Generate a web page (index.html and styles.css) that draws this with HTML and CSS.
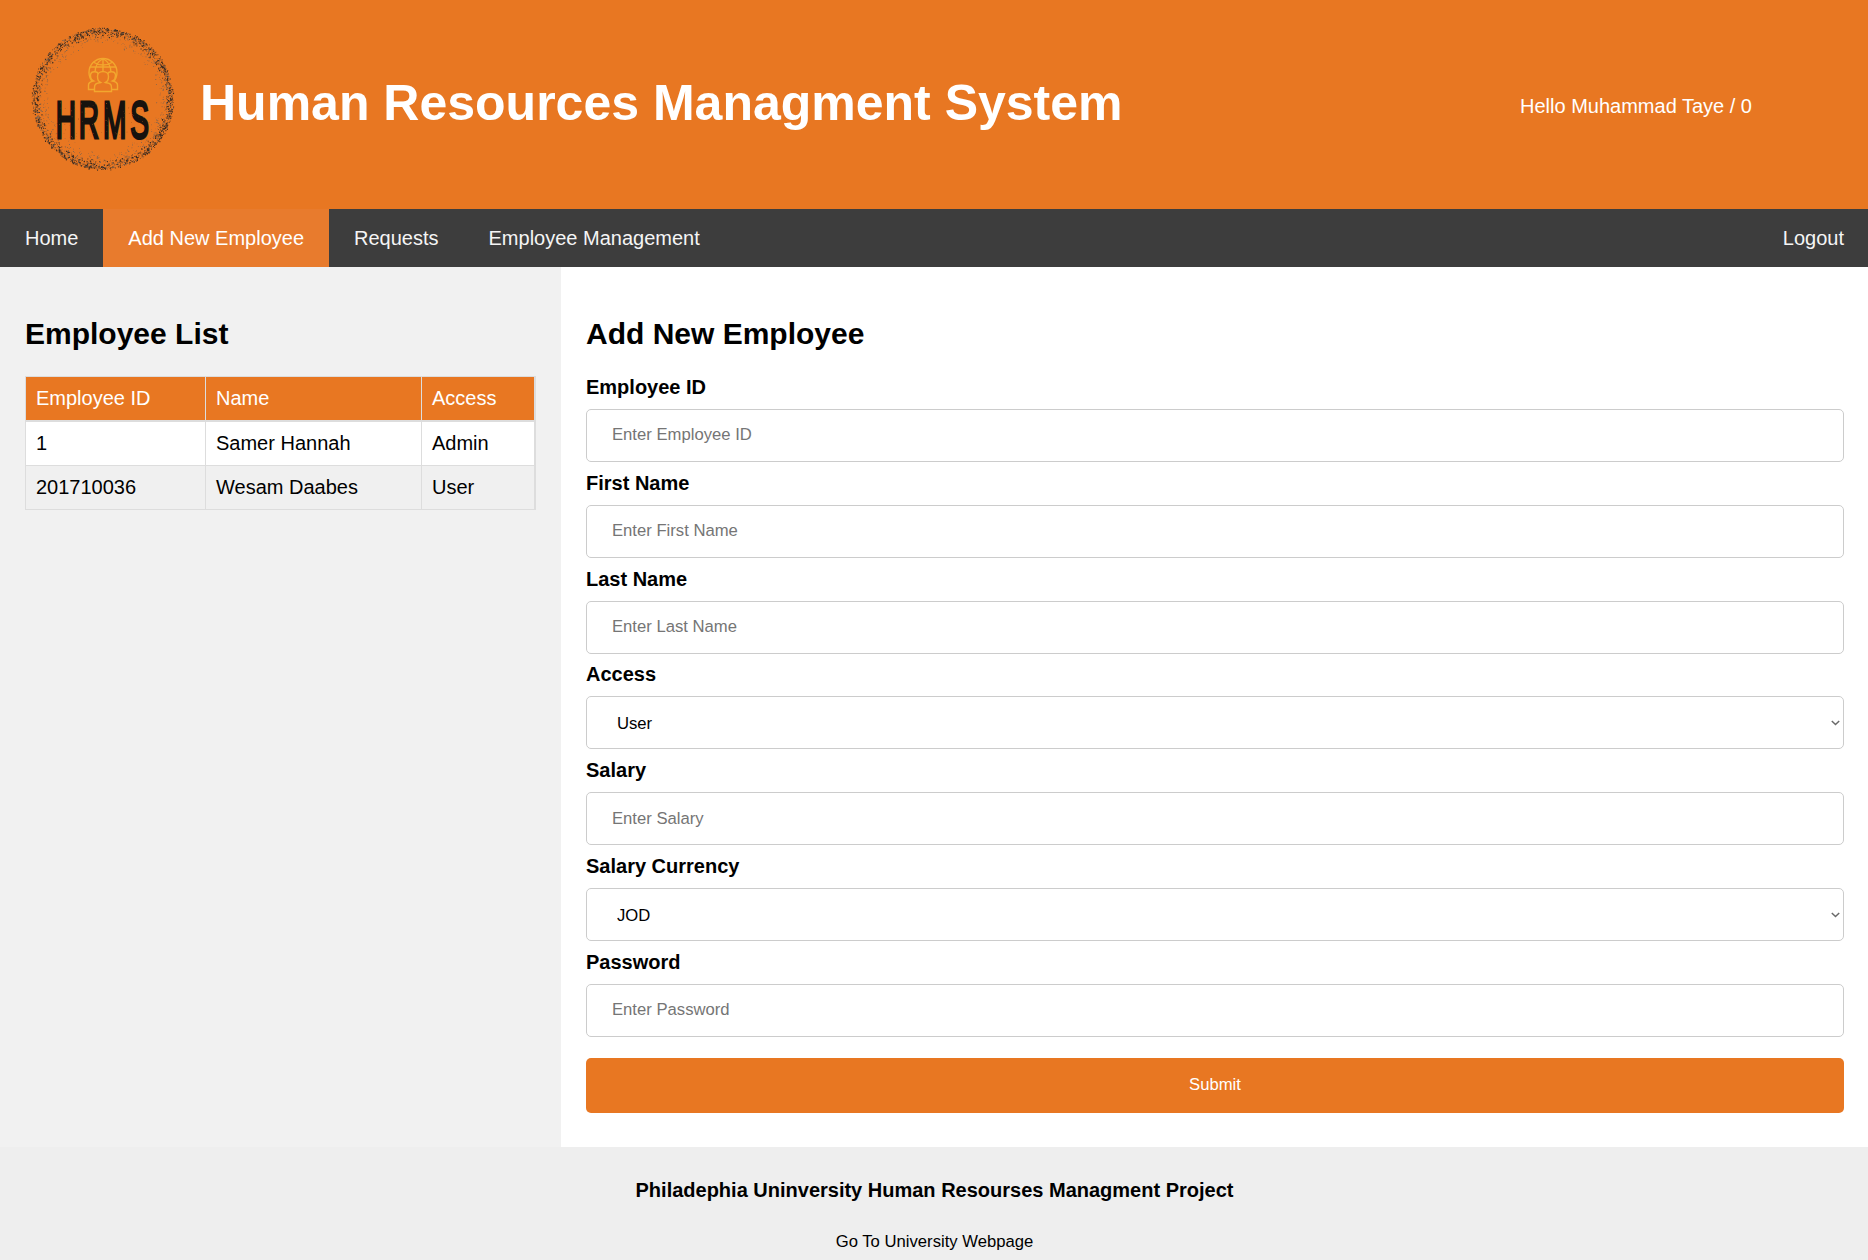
FILE: index.html
```html
<!DOCTYPE html>
<html lang="en">
<head>
<meta charset="utf-8">
<title>Human Resources Managment System</title>
<link rel="stylesheet" href="styles.css">
</head>
<body>
<header class="header">
  <svg class="logo" viewBox="0 0 170 170" aria-label="HRMS">
    <path id="ring-dark" fill="#3b2b20"/>
    <path id="ring-soft" fill="#7d6350"/>
    <g class="logo-globe">
      <circle cx="83" cy="57.500" r="14"/>
      <path d="M83 43.500v28M70 52h26M83 43.500c-5 3-8 8-8 14M83 43.500c5 3 8 8 8 14M73 47c6 4 14 4 20 0"/>
      <path class="logo-person" d="M68.500 74.500v-4.500c0-3 2-3.500 5-4c-2-1-3-3-3-5.500c0-5 8-5 8 0v5h9v-5c0-5 8-5 8 0c0 2.500-1 4.500-3 5.500c3 .5 5 1 5 4v4.500z"/>
      <path class="logo-person" d="M74.500 76.500v-4c0-4 2-4 6-5c-2-1-3-3.500-3-6c0-6.500 11-6.500 11 0c0 2.500-1 5-3 6c4 1 6 1 6 5v4z"/>
    </g>
    <text class="logo-text" transform="scale(.54 1)" x="66 109 153.500 204" y="123">HRMS</text>
    <path id="wear" fill="#a9541b"/>
  </svg>
  <h1 class="title">Human Resources Managment System</h1>
  <p class="greeting">Hello Muhammad Taye / 0</p>
</header>
<nav class="nav">
  <a>Home</a>
  <a class="active">Add New Employee</a>
  <a>Requests</a>
  <a>Employee Management</a>
  <a class="logout">Logout</a>
</nav>
<main class="row">
  <section class="side">
    <h2>Employee List</h2>
    <table class="list">
      <colgroup><col class="c-id"><col class="c-name"><col class="c-access"></colgroup>
      <thead><tr><th>Employee ID</th><th>Name</th><th>Access</th></tr></thead>
      <tbody>
        <tr><td>1</td><td>Samer Hannah</td><td>Admin</td></tr>
        <tr><td>201710036</td><td>Wesam Daabes</td><td>User</td></tr>
      </tbody>
    </table>
  </section>
  <section class="content">
    <h2>Add New Employee</h2>
    <form class="form">
      <div class="field"><label>Employee ID</label><input type="text" placeholder="Enter Employee ID"></div>
      <div class="field"><label>First Name</label><input type="text" placeholder="Enter First Name"></div>
      <div class="field"><label>Last Name</label><input type="text" placeholder="Enter Last Name"></div>
      <div class="field"><label>Access</label>
        <div class="select"><select><option>User</option></select><svg class="chevron" viewBox="0 0 9 6"><path d="M.8 1l3.700 3.500L8.200 1"/></svg></div></div>
      <div class="field"><label>Salary</label><input type="text" placeholder="Enter Salary"></div>
      <div class="field"><label>Salary Currency</label>
        <div class="select"><select><option>JOD</option></select><svg class="chevron" viewBox="0 0 9 6"><path d="M.8 1l3.700 3.500L8.200 1"/></svg></div></div>
      <div class="field"><label>Password</label><input type="password" placeholder="Enter Password"></div>
      <button type="button" class="submit">Submit</button>
    </form>
  </section>
</main>
<footer class="footer">
  <h4>Philadephia Uninversity Human Resourses Managment Project</h4>
  <a>Go To University Webpage</a>
</footer>
<script src="logo.js"></script>
</body>
</html>
```
FILE: styles.css
```css
* { box-sizing: border-box; }
body {
  margin: 0;
  height: 1260px;
  overflow: hidden;
  display: flex;
  flex-direction: column;
  font: 20px/23px "Liberation Sans", Arial, sans-serif;
  color: #000;
  background: #fff;
}
h2 { margin: 0 0 25px; font-size: 30px; line-height: 34px; }

.header {
  flex: none;
  height: 209px;
  padding-left: 20px;
  display: flex;
  align-items: flex-start;
  background: #e87722;
  color: #fff;
}
.logo { width: 170px; height: 170px; margin-top: 15px; flex: none; }
.logo-globe { fill: none; stroke: #f2a72e; stroke-width: 1.4; }
.logo-person { fill: #e87722; }
.logo-text {
  font: 52px "Liberation Sans", Arial, sans-serif;
  fill: #17120e;
  stroke: #17120e;
  stroke-width: 2.4;
  vector-effect: non-scaling-stroke;
}
.title { margin: 75px 0 0 10px; font-size: 50px; line-height: 57px; white-space: nowrap; }
.greeting { margin: 95px 116px 0 auto; white-space: nowrap; }

.nav { flex: none; height: 58px; display: flex; background: #3d3d3d; color: #f5f5f5; }
.nav a { padding: 18px 25px 17px; white-space: nowrap; }
.nav .active { background: #e87b2d; color: #fff; }
.nav .logout { margin-left: auto; padding-right: 24px; }

.row { flex: none; height: 880px; display: flex; }
.side { flex: none; width: 561px; padding: 50px 25px 0; background: #f1f1f1; }
.content { flex: 1; padding: 50px 24px 0 25px; }

.list {
  width: 511px;
  table-layout: fixed;
  border-collapse: separate;
  border-spacing: 0;
  border: 1px solid #ddd;
  border-width: 1px 1px 0 1px;
}
.c-id { width: 180px; }
.c-name { width: 216px; }
.list th, .list td {
  height: 44px;
  padding: 10px;
  text-align: left;
  font-weight: normal;
  border: 0 solid #ddd;
  border-width: 0 1px 1px 0;
}
.list th { height: 45px; border-bottom-width: 2px; background: #e87722; color: #fff; }
.list tbody tr:nth-child(odd) { background: #fff; }
.list tbody tr:nth-child(even) { background: #f0f0f0; }

.form { display: flex; flex-direction: column; }
.field { height: 95.833px; }
.field label { display: block; height: 33px; font-weight: bold; }
.field input, .field select {
  display: block;
  width: 100%;
  height: 52.9px;
  padding: 16px 25px;
  border: 1px solid #ccc;
  border-radius: 5px;
  background: #fff;
  color: #000;
  font: 16.667px/19px "Liberation Sans", Arial, sans-serif;
  appearance: none;
}
.field select { padding: 17px 30px 15px; }
.field input::placeholder { color: #757575; }
.select { position: relative; }
.chevron { position: absolute; right: 4px; top: 24px; width: 9px; height: 6px; fill: none; stroke: #6a6a6a; stroke-width: 1.5; }
.submit {
  height: 55px;
  margin-top: 11px;
  padding: 0 0 2px;
  border: 0;
  border-radius: 5px;
  background: #e87722;
  color: #fff;
  font: 16.667px/19px "Liberation Sans", Arial, sans-serif;
}

.footer { flex: 1; padding: 32px 0 0 1px; text-align: center; background: #eee; }
.footer h4 { margin: 0 0 30px; font-size: 20px; line-height: 23px; }
.footer a { display: block; font-size: 16.667px; line-height: 19px; }
```
FILE: logo.js
```js
// Fixed-seed generator keeps the stippled ring identical on every load.
let seed = 7919;
function rnd() {
  seed = (seed * 16807) % 2147483647;
  return seed / 2147483647;
}
function dot(x, y, s) {
  return `M${x.toFixed(1)} ${y.toFixed(1)}h${s.toFixed(1)}l-.2 ${s.toFixed(1)}h-${(s * 0.7).toFixed(1)}z`;
}
function ring(count, spread, max) {
  let d = "";
  for (let i = 0; i < count; i++) {
    const a = rnd() * Math.PI * 2;
    const r = 71.5 - Math.abs(rnd() + rnd() - 1) * spread - rnd() * 2;
    d += dot(82.5 + r * Math.cos(a), 83.5 + r * Math.sin(a), 0.5 + rnd() * max);
  }
  return d;
}
document.getElementById("ring-dark").setAttribute("d", ring(1300, 9, 0.9));
document.getElementById("ring-soft").setAttribute("d", ring(900, 19, 0.6));

let specks = "";
for (let i = 0; i < 80; i++) {
  specks += dot(38 + rnd() * 90, 87 + rnd() * 36, 0.4 + rnd() * 0.4);
}
document.getElementById("wear").setAttribute("d", specks);
```
